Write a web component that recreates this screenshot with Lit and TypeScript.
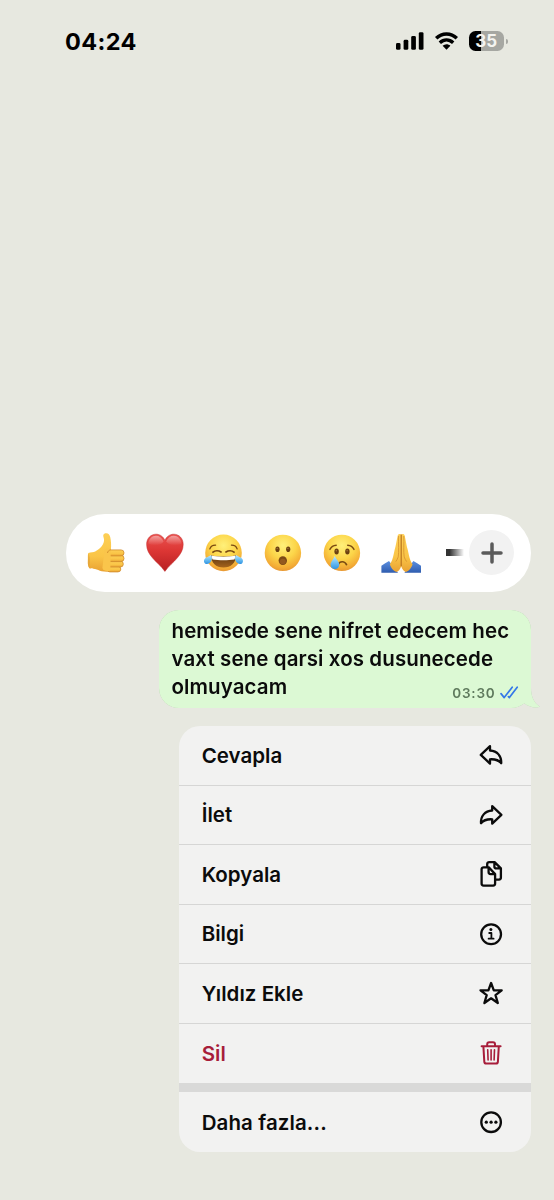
import { LitElement, html, css, svg } from "lit";
import { customElement } from "lit/decorators.js";

const defs = svg`
  <defs>
    <radialGradient id="face" cx=".5" cy=".3" r=".72">
      <stop offset="0" stop-color="#fff07a"/><stop offset=".5" stop-color="#fcd549"/>
      <stop offset=".85" stop-color="#f3ab35"/><stop offset="1" stop-color="#e59434"/>
    </radialGradient>
    <linearGradient id="skin" x1="0" y1="0" x2="0" y2="1">
      <stop offset="0" stop-color="#fdcf55"/><stop offset=".6" stop-color="#fac547"/><stop offset="1" stop-color="#e9a233"/>
    </linearGradient>
    <linearGradient id="heart" x1="0" y1="0" x2="0" y2="1">
      <stop offset="0" stop-color="#ea5350"/><stop offset=".45" stop-color="#dc3634"/><stop offset="1" stop-color="#b71f22"/>
    </linearGradient>
    <linearGradient id="gloss" x1="0" y1="0" x2="0" y2="1">
      <stop offset="0" stop-color="#fff" stop-opacity=".45"/><stop offset="1" stop-color="#fff" stop-opacity="0"/>
    </linearGradient>
    <linearGradient id="tear" x1="0" y1="0" x2="0" y2="1">
      <stop offset="0" stop-color="#c5e8fb"/><stop offset=".5" stop-color="#6fc0f3"/><stop offset="1" stop-color="#2f93e2"/>
    </linearGradient>
    <linearGradient id="sleeve" x1="0" y1="0" x2="0" y2="1">
      <stop offset="0" stop-color="#5b8fe0"/><stop offset="1" stop-color="#2f5cae"/>
    </linearGradient>
    <linearGradient id="mouth" x1="0" y1="0" x2="0" y2="1">
      <stop offset="0" stop-color="#5a3410"/><stop offset="1" stop-color="#a5641c"/>
    </linearGradient>
  </defs>`;

const emojis = [
  svg`
    <path d="M17.3 2C17.8 .6 19 .2 20.3 .3C22.4 .5 23.6 1.8 24.2 4C25 7.4 25.4 12 24.9 17L26 37.5C24 39 19 38.8 15.7 38.2C13 37.7 11.5 36.2 9 35.9C6.8 35.6 4.6 36 3.3 35.2C2 33 1.7 31 1.9 28.4C2 25.5 1.5 22 2.3 19.9C5 19.3 7.5 19.5 9.2 18.5C11.8 16.8 14.4 15.3 15.9 13C17.6 10.2 18.2 8.4 18 6.4C17.8 4.6 17 3.2 17.3 2Z" fill="url(#skin)"/>
    <path d="M2.4 20.6C4.6 24 3.6 31 3.6 35.2C1.6 33.5 1.8 30 1.9 27Z" fill="#dc9a36" opacity=".55"/>
    <g fill="url(#skin)" stroke="#d18c2c" stroke-width=".8">
      <rect x="21" y="33.3" width="13.8" height="5.6" rx="2.8"/>
      <rect x="21.4" y="28.1" width="15.9" height="5.9" rx="2.9"/>
      <rect x="21.2" y="22.3" width="16.8" height="6.3" rx="3.1"/>
      <rect x="21.6" y="16.9" width="16.4" height="6" rx="3"/>
    </g>
    <path d="M18.4 17.4C19 15.9 20.6 15 24.8 15.6L24.3 37.4C21 38.6 17 37.6 16.4 35Z" fill="#fac54b"/>
    <path d="M24.9 16.8C23 17 21.7 18.3 21.5 20" fill="none" stroke="#d18c2c" stroke-width=".9"/>`,
  svg`
    <path d="M19.9 38.4C16 33 11.5 29.6 7.4 24.8C4 20.8 1.6 16.6 1.6 11.4C1.6 5.2 5.9 1.2 11 1.2C15 1.2 18.3 3.5 19.9 7.4C21.5 3.5 24.8 1.2 28.8 1.2C33.9 1.2 38.2 5.2 38.2 11.4C38.2 16.6 35.8 20.8 32.4 24.8C28.3 29.6 23.8 33 19.9 38.4Z" fill="url(#heart)" stroke="#c32b2b" stroke-width=".5"/>
    <path d="M3.4 10.6C3.4 6 7 2.7 11 2.7C14.2 2.7 17 4.6 18.6 8.4C16 12.5 8 13.5 3.4 10.6ZM36.4 10.6C36.4 6 32.8 2.7 28.8 2.7C25.6 2.7 22.8 4.6 21.2 8.4C24 12.5 32 13.5 36.4 10.6Z" fill="url(#gloss)"/>`,
  svg`
    <circle cx="19.5" cy="19.9" r="18.3" fill="url(#face)"/>
    <g fill="none" stroke="#7a4a12" stroke-width="1.2" stroke-linecap="round">
      <path d="M5.8 16C6.8 13.2 8.8 12.1 11.6 12.2"/><path d="M27.4 12.2C30.2 12.1 32.2 13.2 33.2 16"/>
      <path stroke-width="1.8" d="M9 19.2C11 17.4 14.6 17.4 17 18.9M22 18.9C24.4 17.4 28 17.4 30 19.2"/>
    </g>
    <path d="M6.9 22.3C10.5 24 28.5 24 32.1 22.3C32 29.8 27 34.6 19.5 34.6S7 29.8 6.9 22.3Z" fill="url(#mouth)"/>
    <path d="M7.6 22.6C12 24 27 24 31.4 22.6C31.4 24.2 31 25.4 30.4 26.4C24 27.4 15 27.4 8.6 26.4C8 25.4 7.6 24.2 7.6 22.6Z" fill="#fff"/>
    <path d="M6.9 22C8.5 23.6 8.3 26.4 7 28.6C5.4 31.2 2.4 31.8 .8 30.2C-.8 28.4 .2 25.8 2.2 24.6C4.2 23.6 5.6 23 6.9 22ZM32.1 22C30.5 23.6 30.7 26.4 32 28.6C33.6 31.2 36.6 31.8 38.2 30.2C39.8 28.4 38.8 25.8 36.8 24.6C34.8 23.6 33.4 23 32.1 22Z" fill="url(#tear)"/>`,
  svg`
    <circle cx="19.9" cy="19.9" r="18.2" fill="url(#face)"/>
    <ellipse cx="14.5" cy="16.2" rx="2.1" ry="2.8" fill="#6b4011"/><ellipse cx="25.2" cy="16.2" rx="2.1" ry="2.8" fill="#6b4011"/>
    <circle cx="14.2" cy="15.4" r=".7" fill="#a87a3c"/><circle cx="24.9" cy="15.4" r=".7" fill="#a87a3c"/>
    <ellipse cx="19.8" cy="27.6" rx="4.2" ry="4.3" fill="#7b4815"/><ellipse cx="19.8" cy="28.6" rx="3" ry="2.8" fill="#93591f"/>`,
  svg`
    <circle cx="19.9" cy="19.9" r="18.2" fill="url(#face)"/>
    <ellipse cx="14.6" cy="18.6" rx="2.2" ry="3" fill="#6b4011"/><ellipse cx="25.4" cy="18.6" rx="2.2" ry="3" fill="#6b4011"/>
    <circle cx="14.3" cy="17.7" r=".7" fill="#a87a3c"/><circle cx="25.1" cy="17.7" r=".7" fill="#a87a3c"/>
    <g fill="none" stroke="#7a4a12" stroke-width="1.4" stroke-linecap="round">
      <path d="M7.9 16.4C9.2 13.8 11.3 12.4 14.2 12.2"/><path d="M25.7 12.2C28.6 12.4 30.7 13.8 32 16.4"/>
      <path stroke-width="1.7" d="M16.4 31.2C17.8 27.9 22.7 27.9 24.5 31.6"/>
    </g>
    <path d="M12.8 22.8C13.6 25.8 17.3 28.6 17.3 31.8C17.3 34.4 15.3 36.2 12.9 36.2S8.6 34.4 8.6 31.8C8.6 28.6 12 25.8 12.8 22.8Z" fill="url(#tear)"/>`,
  svg`
    <path d="M.4 32.8C2.8 31 5.6 29.6 8 28L17 39.8H.4ZM40 32.8C37.6 31 34.8 29.6 32.4 28L23.4 39.8H40Z" fill="url(#sleeve)"/>
    <path d="M20.2 1.5C19.2 .6 17.4 .7 16.8 2.2C15.6 7.4 15 12.2 13.6 17C12.9 20.6 12.2 23.6 11.2 26.8C10.6 28.6 9.6 29.8 8.8 31.4C10 34.6 12 37.4 15.4 38.9C17.6 38.2 19.3 36 20.2 33.2C21.1 36 22.8 38.2 25 38.9C28.4 37.4 30.4 34.6 31.6 31.4C30.8 29.8 29.8 28.6 29.2 26.8C28.2 23.6 27.5 20.6 26.8 17C25.4 12.2 24.8 7.4 23.6 2.2C23 .7 21.2 .6 20.2 1.5Z" fill="url(#skin)"/>
    <path d="M20.2 1.6V33.2" stroke="#b9741f" stroke-width="1.2" fill="none"/>
    <path d="M17.6 3C17.2 11 18.2 18 17.2 24C16.8 26 15.6 27 14.8 28.6M22.8 3C23.2 11 22.2 18 23.2 24C23.6 26 24.8 27 25.6 28.6" stroke="#d9952f" stroke-width=".9" fill="none"/>`,
];

const icons: Record<string, unknown> = {
  reply: svg`<path d="M13 5.2 3.8 13.9 13 22.6V18.3C18.3 18 21.6 19 24.2 22.2C24.6 15.2 20.4 9.9 13 9.5Z"/>`,
  forward: svg`<path d="M15.2 5.2 24.4 13.9 15.2 22.6V18.3C9.9 18 6.6 19 4 22.2C3.6 15.2 7.8 9.9 15.2 9.5Z"/>`,
  copy: svg`<path d="M6.6 7.3h5.2l6.3 6.8v9.5a2 2 0 0 1-2 2H6.6a2 2 0 0 1-2-2V9.3a2 2 0 0 1 2-2zM11.6 7.5v4.6a2 2 0 0 0 2 2h4.3M10.2 6.9V4.1a2 2 0 0 1 2-2h5.4l6.3 6.3v9.2a2 2 0 0 1-2 2h-3.6M17.4 2.3v4.1a2 2 0 0 0 2 2h4.3"/>`,
  info: svg`<circle cx="14.1" cy="14.2" r="9.9"/><circle cx="13.9" cy="9.6" r="1.5" fill="currentColor" stroke="none"/><path stroke-width="1.8" d="M12.2 13h2.2v5.6M11.6 18.7h5"/>`,
  star: svg`<path d="M14.1 4 16.8 11.3H24.7L18.5 16.1 20.8 24 14.1 19.3 7.4 24 9.7 16.1 3.5 11.3H11.4Z"/>`,
  trash: svg`<path stroke-width="2" d="M4.6 6.2H23.6M10.2 6V4.2a2 2 0 0 1 2-2h3.8a2 2 0 0 1 2 2V6M6.4 6.4 7.3 21.6a2 2 0 0 0 2 1.9h9.6a2 2 0 0 0 2-1.9L21.8 6.4"/><path stroke-width="1.6" d="M10.7 9.8 11.1 20M14.1 9.8V20M17.5 9.8 17.1 20"/>`,
  more: svg`<circle cx="14.1" cy="14.2" r="9.8"/><g fill="currentColor" stroke="none"><circle cx="9.3" cy="14.2" r="1.6"/><circle cx="14.1" cy="14.2" r="1.6"/><circle cx="18.9" cy="14.2" r="1.6"/></g>`,
};

const items = [
  { label: "Cevapla", icon: "reply", cls: "" },
  { label: "İlet", icon: "forward", cls: "" },
  { label: "Kopyala", icon: "copy", cls: "" },
  { label: "Bilgi", icon: "info", cls: "" },
  { label: "Yıldız Ekle", icon: "star", cls: "" },
  { label: "Sil", icon: "trash", cls: "danger" },
  { label: "Daha fazla...", icon: "more", cls: "last" },
];

@customElement("app-root")
export class AppRoot extends LitElement {
  static styles = css`
    :host {
      display: flex;
      flex-direction: column;
      box-sizing: border-box;
      width: 554px;
      height: 1200px;
      overflow: hidden;
      background: #e7e8e0;
      color: #0b0b0b;
      font-family: Inter, "Liberation Sans", sans-serif;
      font-weight: 560;
    }
    svg { display: block; overflow: visible; }
    .status {
      display: flex;
      align-items: center;
      height: 82px;
      padding: 0 46.5px 0 65px;
      flex: none;
    }
    .clock { font-size: 23.5px; font-weight: 750; letter-spacing: 0.4px; color: #000; }
    .signals { display: flex; align-items: center; gap: 11px; margin-left: auto; }
    .battery { display: flex; align-items: center; gap: 1.5px; }
    .cell {
      display: grid;
      place-items: center;
      width: 35.5px;
      height: 20px;
      border-radius: 6.5px;
      background: linear-gradient(90deg, #000 12px, #a6a7a2 12px);
      color: #f4f4f0;
      font-size: 17px;
      font-weight: 700;
      line-height: 20px;
    }
    .nub { width: 2px; height: 5px; border-radius: 0 2px 2px 0; background: #a6a7a2; }
    .column {
      display: flex;
      flex-direction: column;
      align-items: flex-end;
      padding: 431.5px 23px 0 0;
    }
    .reactions {
      display: flex;
      align-items: center;
      box-sizing: border-box;
      width: 465px;
      height: 78.5px;
      padding: 0 17px 0 20px;
      border-radius: 40px;
      background: #fff;
    }
    .faces { display: flex; gap: 19.1px; }
    .dash { width: 18px; height: 7px; margin-left: 24.5px; background: linear-gradient(90deg, #333 20%, #fff); }
    .plus {
      display: grid;
      place-items: center;
      width: 45px;
      height: 45px;
      margin-left: auto;
      border-radius: 50%;
      background: #f2f2f2;
    }
    .bubble {
      position: relative;
      box-sizing: border-box;
      width: 372px;
      height: 98.5px;
      margin: 17.5px 0.5px 0 0;
      padding: 7px 13px;
      border-radius: 20px;
      background: #dcf9d4;
      filter: drop-shadow(0 0 0.6px rgba(120, 150, 115, 0.45));
    }
    .text { font-size: 20.5px; line-height: 28.25px; letter-spacing: 0.1px; white-space: nowrap; }
    .meta {
      position: absolute;
      right: 13px;
      bottom: 7.5px;
      display: flex;
      align-items: center;
      gap: 4px;
      color: #5f7a5d;
      font-size: 13.5px;
      letter-spacing: 0.8px;
      line-height: 16px;
    }
    .tail { position: absolute; right: -9px; bottom: 0; }
    .menu {
      width: 352px;
      margin-top: 18px;
      border-radius: 21px;
      background: #f2f2f1;
      overflow: hidden;
    }
    .item {
      display: flex;
      align-items: center;
      justify-content: space-between;
      box-sizing: border-box;
      height: 59.55px;
      padding: 0 26px 0 22.7px;
      border-bottom: 1px solid #d6d6d5;
      font-size: 20.5px;
      letter-spacing: 0.02px;
    }
    .danger { color: #a71d3a; border-bottom: 0; }
    .last { height: 69px; border-top: 9.5px solid #d9d9d8; border-bottom: 0; letter-spacing: 0.1px; }
    .icon { fill: none; stroke: currentColor; stroke-width: 2.3; stroke-linecap: round; stroke-linejoin: round; }
  `;

  render() {
    return html`
      <div class="status">
        <span class="clock">04:24</span>
        <div class="signals">
          <svg width="27.5" height="18" viewBox="0 0 27.5 18"><rect y="11" width="4.5" height="6.8" rx="1.4"/><rect x="7.6" y="7.8" width="4.7" height="10" rx="1.4"/><rect x="15.2" y="4" width="4.7" height="13.8" rx="1.4"/><rect x="22.8" y=".2" width="4.7" height="17.6" rx="1.4"/></svg>
          <svg width="23" height="18" viewBox="0 0 23 18" fill="none" stroke="#000" stroke-width="3.4"><path d="M1.2 6.3C7 .5 16 .5 21.8 6.3"/><path d="M4.8 10.8C8.8 7 14.2 7 18.2 10.8"/><path d="M7.6 13.8C10 11.8 13 11.8 15.4 13.8L11.5 17.8Z" fill="#000" stroke="none"/></svg>
          <div class="battery"><div class="cell">35</div><div class="nub"></div></div>
        </div>
      </div>
      <div class="column">
        <div class="reactions">
          <div class="faces">
            ${emojis.map((e) => html`<svg width="40" height="40" viewBox="0 0 40 40">${defs}${e}</svg>`)}
          </div>
          <div class="dash"></div>
          <div class="plus">
            <svg width="22" height="22" viewBox="0 0 22 22" stroke="#5b5b5b" stroke-width="3.5" stroke-linecap="round"><path d="M11 2v18M2 11h18"/></svg>
          </div>
        </div>
        <div class="bubble">
          <svg class="tail" width="24" height="20" viewBox="0 0 24 20"><path d="M0 0H15C15 8 17.5 14.5 24 18.8C18.5 20.4 13 18.8 8.5 15.5L0 18Z" fill="#dcf9d4"/></svg>
          <div class="text">hemisede sene nifret edecem hec<br />vaxt sene qarsi xos dusunecede<br />olmuyacam</div>
          <div class="meta">
            <span>03:30</span>
            <svg width="18" height="13" viewBox="0 0 18 13" fill="none" stroke="#3478e8" stroke-width="1.7" stroke-linecap="round" stroke-linejoin="round"><path d="M1 7.6 4.2 11.6 12.2 1.2M8.4 10.6 9.4 11.6 17.2 1.2"/></svg>
          </div>
        </div>
        <div class="menu">
          ${items.map(
            (i) => html`<div class="item ${i.cls}"><span>${i.label}</span><svg class="icon" width="28" height="28" viewBox="0 0 28 28">${icons[i.icon]}</svg></div>`
          )}
        </div>
      </div>
    `;
  }
}
